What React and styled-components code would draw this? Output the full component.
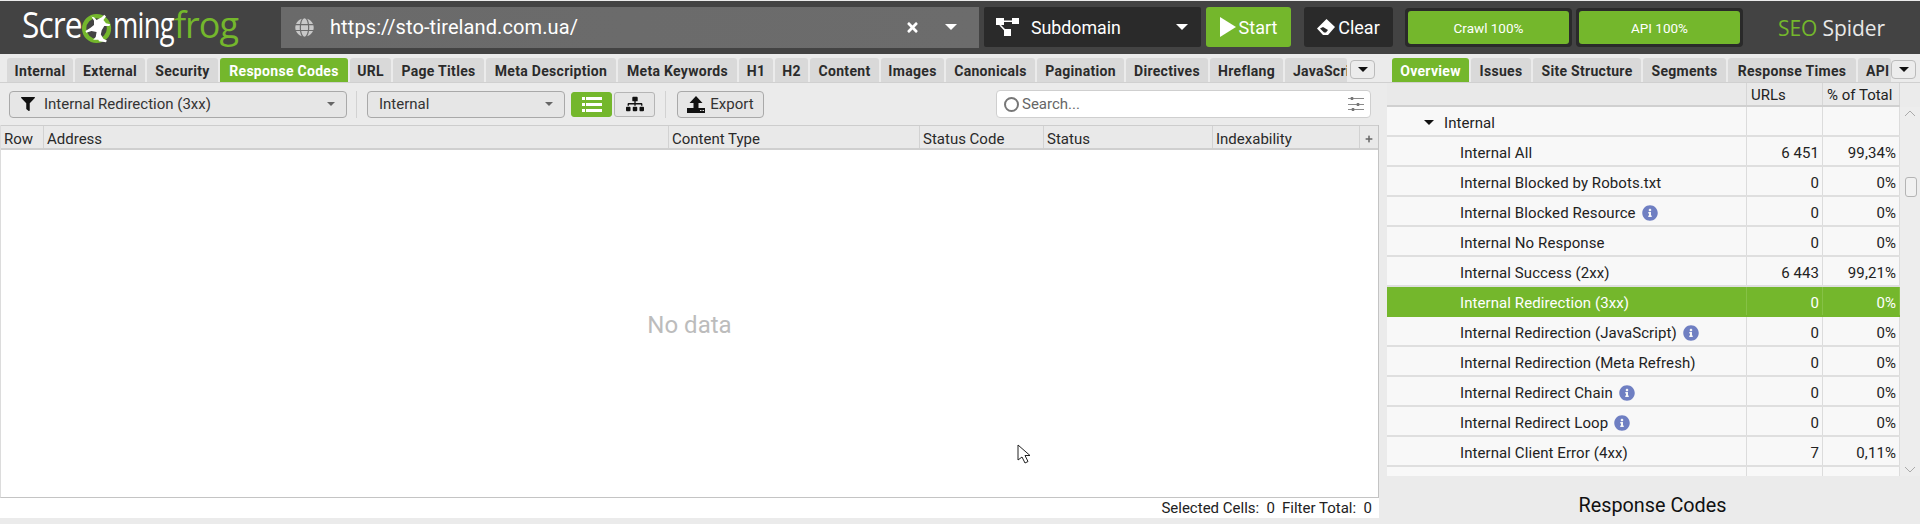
import React from "react";
import styled, { createGlobalStyle } from "styled-components";
import { FaGlobe, FaTimes, FaInfoCircle, FaSitemap, FaFilter, FaPlus } from "react-icons/fa";

const Global = createGlobalStyle`
  html, body { margin: 0; padding: 0; background: #ebebeb; }
  body { font-family: Roboto, "Liberation Sans", sans-serif; overflow: hidden; }
  * { box-sizing: border-box; }
`;
const Page = styled.div`width:1920px;height:524px;display:flex;flex-direction:column;background:#ebebeb;color:#222;overflow:hidden;`;
const TopBar = styled.header`height:53px;margin-top:1px;background:#434343;display:flex;align-items:center;flex:none;`;
const Logo = styled.div`width:281px;padding-left:22px;display:flex;align-items:center;font-family:"Open Sans",sans-serif;font-size:36px;font-weight:400;color:#fff;height:100%;padding-bottom:6px;`;
const LogoWord = styled.span`display:block;width:${p=>p.$w}px;white-space:nowrap;letter-spacing:-1px;transform:scaleX(${p=>p.$sx});transform-origin:left center;color:${p=>p.$green?"#74b72c":"#fff"};flex:none;`;
const LogoGreen = styled.span`color:#74b72c;`;
const UrlField = styled.div`width:698px;height:41px;background:linear-gradient(90deg,#6a6a6a,#6c6c6c);display:flex;align-items:center;padding:0 22px 0 14px;color:#fff;font-size:20px;margin-top:-1px;`;
const UrlText = styled.span`margin-left:16px;flex:1;letter-spacing:.1px;`;
const Caret = styled.span`width:0;height:0;border-left:${p=>p.$s||6}px solid transparent;border-right:${p=>p.$s||6}px solid transparent;border-top:${p=>p.$s||6}px solid ${p=>p.$c||"#fff"};display:block;`;
const ModeBox = styled.div`margin-left:5px;width:217px;height:40px;background:#2a2a2a;border-radius:2px;color:#fff;font-size:17.8px;display:flex;align-items:center;padding:0 13px 0 12px;margin-top:-1px;`;
const ModeText = styled.span`margin-left:12px;flex:1;`;
const Start = styled.div`margin-left:5px;width:85px;height:40px;background:#74b72c;border-radius:3px;color:#fff;font-size:18px;display:flex;align-items:center;justify-content:center;gap:3px;margin-top:-1px;`;
const Clear = styled.div`margin-left:13px;width:89px;height:40px;background:#2a2a2a;border-radius:3px;color:#fff;font-size:18px;display:flex;align-items:center;justify-content:center;gap:3px;margin-top:-1px;`;
const Progress = styled.div`margin-left:${p=>p.$ml}px;width:167px;height:39px;background:#2a2a2a;border-radius:4px;padding:3px;flex:none;`;
const ProgressFill = styled.div`width:100%;height:100%;background:#74b72c;border-radius:3px;color:#fff;font-size:13.5px;display:flex;align-items:center;justify-content:center;`;
const Brand = styled.div`margin-left:35px;font-family:"Open Sans",sans-serif;font-size:21px;color:#e8e8e8;font-weight:400;letter-spacing:-.1px;`;

const Main = styled.main`display:grid;grid-template-columns:1379px 541px;flex:1;min-height:0;`;
const Col = styled.section`display:flex;flex-direction:column;min-width:0;`;
const TabStrip = styled.nav`height:29px;padding:4px 0 0 ${p=>p.$pl}px;display:flex;gap:2px;border-bottom:1px solid #d0d0d0;flex:none;background:#ebebeb;position:relative;`;
const Tab = styled.div`width:${p=>p.$w}px;height:24px;border-radius:3px 3px 0 0;background:${p=>p.$on?"#74b72c":"#d9d9d9"};color:${p=>p.$on?"#fff":"#2b2b2b"};font-size:14px;font-weight:700;display:flex;align-items:center;justify-content:${p=>p.$clip?"flex-start":"center"};padding:1px 0 0 ${p=>p.$clip?"8px":"0"};white-space:nowrap;overflow:hidden;flex:none;letter-spacing:.3px;`;
const MoreBtn = styled.button`margin:2px 0 0 ${p=>p.$ml||1}px;width:25px;height:19px;border:1px solid #bbb;border-radius:4px;background:#ececec;padding:0;display:flex;align-items:center;justify-content:center;flex:none;`;

const FilterBar = styled.div`height:42px;display:flex;align-items:center;padding-left:9px;flex:none;`;
const Combo = styled.div`width:${p=>p.$w}px;height:27px;border:1px solid #a9a9a9;border-radius:4px;background:#e6e6e6;display:flex;align-items:center;padding:0 11px;font-size:15px;color:#333;flex:none;`;
const ComboText = styled.span`flex:1;margin-left:${p=>p.$ml||0}px;`;
const Sep = styled.div`width:1px;height:27px;background:#d2d2d2;margin:0 ${p=>p.$r}px 0 ${p=>p.$l}px;flex:none;`;
const ViewBtn = styled.div`width:41px;height:25px;margin-left:${p=>p.$ml}px;background:${p=>p.$on?"#74b72c":"#e6e6e6"};border:1px solid ${p=>p.$on?"#74b72c":"#b5b5b5"};border-radius:3px;display:flex;align-items:center;justify-content:center;flex:none;`;
const ExportBtn = styled.div`width:87px;height:27px;border:1px solid #a9a9a9;border-radius:4px;background:#e6e6e6;display:flex;align-items:center;justify-content:center;gap:5px;font-size:15px;color:#333;flex:none;`;
const Search = styled.div`margin-left:232px;width:375px;height:28px;background:#fff;border:1px solid #cfcfcf;border-radius:4px;display:flex;align-items:center;padding:0 6px 0 7px;font-size:15px;color:#666;flex:none;`;
const SearchText = styled.span`margin-left:3px;flex:1;`;
const Ring = styled.span`width:15px;height:15px;border:2px solid #777;border-radius:50%;`;

const TableFrame = styled.div`flex:1;min-height:0;background:#fff;border-right:1px solid #c4c4c4;border-left:1px solid #dcdcdc;border-bottom:1px solid #c4c4c4;display:flex;flex-direction:column;`;
const HeadRow = styled.div`height:25px;flex:none;background:#e9e9e9;border-top:1px solid #cdcdcd;border-bottom:2px solid #cfcfcf;display:grid;grid-template-columns:${p=>p.$cols};`;
const HeadCell = styled.div`font-size:15px;color:#2a2a2a;display:flex;align-items:center;padding:3px 0 0 ${p=>p.$center?0:3}px;justify-content:${p=>p.$center?"center":"flex-start"};border-right:${p=>p.$last?"0":"1px solid #d2d2d2"};`;
const Empty = styled.div`flex:1;display:flex;align-items:center;justify-content:center;font-size:24px;color:#bcbcbc;position:relative;padding-top:2px;`;
const Cursor = styled.svg`position:absolute;left:1016px;top:294px;`;
const StatusBar = styled.div`height:20px;flex:none;background:#fff;display:flex;justify-content:flex-end;align-items:center;gap:7px;padding-right:7px;font-size:15px;color:#222;`;
const Foot = styled.div`height:6px;flex:none;`;

const PanelBody = styled.div`display:grid;grid-template-columns:513px 20px;margin-left:8px;height:393px;flex:none;`;
const Tree = styled.div`height:393px;display:flex;flex-direction:column;overflow:hidden;`;
const RightHead = styled.div`height:24px;flex:none;background:#e9e9e9;border-bottom:2px solid #d0d0d0;display:grid;grid-template-columns:360px 76px 77px 20px;width:533px;`;
const RightHeadCell = styled.div`font-size:15px;color:#222;display:flex;align-items:center;padding:2px 0 0 4px;border-right:1px solid #d6d6d6;`;
const Row = styled.div`height:30px;flex:none;display:grid;grid-template-columns:360px 76px 77px;background:${p=>p.$on?"#74b72c":"#f8f8f8"};color:${p=>p.$on?"#fff":"#222"};border-bottom:2px solid ${p=>p.$on?"#74b72c":"#dfdfdf"};font-size:15px;letter-spacing:.08px;`;
const Cell = styled.div`display:flex;align-items:center;border-right:1px solid ${p=>p.$on?"#86c146":"#dcdcdc"};padding:3px ${p=>p.$num?3:0}px 0 ${p=>p.$pl||0}px;justify-content:${p=>p.$num?"flex-end":"flex-start"};`;
const ExpandCaret = styled.span`margin-right:10px;`;
const InfoIcon = styled(FaInfoCircle)`color:#6f7fc2;margin-left:6px;font-size:16px;`;
const ScrollTrack = styled.div`grid-column:2;grid-row:1;background:#ededed;margin-top:24px;display:flex;flex-direction:column;align-items:center;justify-content:space-between;padding:3px 0;height:369px;position:relative;`;
const Thumb = styled.div`position:absolute;top:70px;left:5px;width:12px;height:20px;border:1px solid #b4b4b4;border-radius:3px;background:#f1f1f1;`;
const PanelTitle = styled.div`height:48px;flex:none;font-size:19.8px;color:#111;display:flex;align-items:center;justify-content:center;padding-top:10px;margin-left:7px;width:533px;`;

const leftTabs=[["Internal",66],["External",70],["Security",71],["Response Codes",128,1],["URL",41],["Page Titles",91],["Meta Description",130],["Meta Keywords",119],["H1",34],["H2",33],["Content",69],["Images",63],["Canonicals",89],["Pagination",87],["Directives",82],["Hreflang",73]];
const rightTabs=[["Overview",77,1],["Issues",60],["Site Structure",108],["Segments",83],["Response Times",128]];
const rows=[["Internal All","6 451","99,34%"],["Internal Blocked by Robots.txt","0","0%"],["Internal Blocked Resource","0","0%",0,1],["Internal No Response","0","0%"],["Internal Success (2xx)","6 443","99,21%"],["Internal Redirection (3xx)","0","0%",1],["Internal Redirection (JavaScript)","0","0%",0,1],["Internal Redirection (Meta Refresh)","0","0%"],["Internal Redirect Chain","0","0%",0,1],["Internal Redirect Loop","0","0%",0,1],["Internal Client Error (4xx)","7","0,11%"]];

const Frog=()=> (
  <svg width="30" height="33" viewBox="2 1 35 38" style={{margin:"7px 1px 0 2px",flex:"none"}}>
    <circle cx="19" cy="20" r="14.5" fill="none" stroke="#74b72c" strokeWidth="5"/>
    <path d="M12 6l4 1 3 3 6-3 3-3 2 2-3 4 3 4 5 1-1 2-6 0-3 5-1 5 3 5 4 2-1 2-8-1-1-2-6 0 3-3 1-6-6-1-6 2-1-2 6-4 4-3 0-5-3-5z" fill="#fff"/>
  </svg>
);
const Play=()=> <svg width="16" height="20" viewBox="0 0 16 20"><path d="M0 0l16 10L0 20z" fill="#fff"/></svg>;
const Eraser=()=> <svg width="18" height="16" viewBox="0 0 18 16"><path d="M9.5 0L18 8l-7 8H6L0 9.5z" fill="#fff"/><path d="M3 9.5l3-1.5 5 3-2 2.5H7z" fill="#2a2a2a"/></svg>;
const TreeIcon=()=> <svg width="23" height="18" viewBox="0 0 23 18" fill="#fff"><path d="M0 0h8v7H0zM16 0h7v6h-7zM8 11h7v7H8z"/><path d="M8 2.5h8V4H8zM5 7l5 5-1.2 1.2-5.5-6z"/></svg>;
const ListIcon=()=> <svg width="20" height="15" viewBox="0 0 20 15" fill="#fff"><path d="M0 0h3v3H0zM4 0h16v3H4zM0 6h3v3H0zM4 6h16v3H4zM0 12h3v3H0zM4 12h16v3H4z"/></svg>;
const ExportIcon=()=> <svg width="18" height="17" viewBox="0 0 18 17" fill="#111"><path d="M9 0l6.5 7h-4v5.5h-5V7h-4z"/><path d="M0 12h18v5H0z"/><path d="M13 14h1.5v1H13zM15.5 14H17v1h-1.5z" fill="#ddd"/></svg>;
const Sliders=()=> <svg width="16" height="16" viewBox="0 0 16 16" stroke="#8a8a8a" strokeWidth="1"><path d="M0 2.5h16M0 8.5h16M0 13.5h16"/><path d="M4 1v3M10 7v3M5 12v3" strokeWidth="2.5" stroke="#777"/></svg>;
const Chevron=({up})=> <svg width="12" height="7" viewBox="0 0 12 7" fill="none" stroke="#aaa" strokeWidth="1"><path d={up?"M1 6l5-5 5 5":"M1 1l5 5 5-5"}/></svg>;

export default function App(){
  return <Page><Global/>
    <TopBar>
      <Logo><LogoWord $w={58} $sx={0.88}>Scre</LogoWord><Frog/><LogoWord $w={61} $sx={0.76}>ming</LogoWord><LogoWord $w={62} $sx={1} $green>frog</LogoWord></Logo>
      <UrlField><FaGlobe color="#c8c8c8" size={19}/><UrlText>https://sto-tireland.com.ua/</UrlText><FaTimes color="#fff" size={15}/><span style={{width:25}}/><Caret $s={6}/></UrlField>
      <ModeBox><TreeIcon/><ModeText>Subdomain</ModeText><Caret $s={6}/></ModeBox>
      <Start><Play/>Start</Start>
      <Clear><Eraser/>Clear</Clear>
      <Progress $ml={12}><ProgressFill>Crawl 100%</ProgressFill></Progress>
      <Progress $ml={4}><ProgressFill>API 100%</ProgressFill></Progress>
      <Brand><LogoGreen>SEO</LogoGreen> Spider</Brand>
    </TopBar>
    <Main>
      <Col>
        <TabStrip $pl={7}>
          {leftTabs.map(([t,w,on])=><Tab key={t} $w={w} $on={on}>{t}</Tab>)}
          <Tab $w={62} $clip>JavaScript</Tab>
          <MoreBtn $ml={1}><Caret $s={5} $c="#111"/></MoreBtn>
        </TabStrip>
        <FilterBar>
          <Combo $w={338}><FaFilter size={14} color="#111"/><ComboText $ml={9}>Internal Redirection (3xx)</ComboText><Caret $s={4} $c="#666"/></Combo>
          <Sep $l={9} $r={10}/>
          <Combo $w={198}><ComboText>Internal</ComboText><Caret $s={4} $c="#666"/></Combo>
          <ViewBtn $ml={6} $on><ListIcon/></ViewBtn>
          <ViewBtn $ml={2}><FaSitemap size={18} color="#111"/></ViewBtn>
          <Sep $l={10} $r={11}/>
          <ExportBtn><ExportIcon/>Export</ExportBtn>
          <Search><Ring/><SearchText>Search...</SearchText><Sliders/></Search>
        </FilterBar>
        <TableFrame>
          <HeadRow $cols="43px 625px 251px 124px 169px 147px 1fr">
            <HeadCell>Row</HeadCell><HeadCell>Address</HeadCell><HeadCell>Content Type</HeadCell><HeadCell>Status Code</HeadCell><HeadCell>Status</HeadCell><HeadCell>Indexability</HeadCell><HeadCell $center $last><FaPlus size={8} color="#666"/></HeadCell>
          </HeadRow>
          <Empty>No data
            <Cursor width="16" height="20" viewBox="0 0 16 20"><path d="M1 1v15l4-3 3 6 3-1.5-3-6h5z" fill="#fff" stroke="#222" strokeWidth="1"/></Cursor>
          </Empty>
        </TableFrame>
        <StatusBar><span>Selected Cells:&nbsp; 0</span><span>Filter Total:&nbsp; 0</span></StatusBar>
        <Foot/>
      </Col>
      <Col>
        <TabStrip $pl={13}>
          {rightTabs.map(([t,w,on])=><Tab key={t} $w={w} $on={on}>{t}</Tab>)}
          <Tab $w={33} $clip>API</Tab>
          <MoreBtn $ml={-2}><Caret $s={5} $c="#111"/></MoreBtn>
        </TabStrip>
        <PanelBody>
          <Tree>
            <RightHead><RightHeadCell/><RightHeadCell>URLs</RightHeadCell><RightHeadCell>% of Total</RightHeadCell><RightHeadCell/></RightHead>
            <Row><Cell $pl={37}><ExpandCaret><Caret $s={5} $c="#111"/></ExpandCaret>Internal</Cell><Cell/><Cell/></Row>
            {rows.map(([n,a,b,on,info])=><Row key={n} $on={on}><Cell $on={on} $pl={73}>{n}{info&&<InfoIcon/>}</Cell><Cell $on={on} $num>{a}</Cell><Cell $on={on} $num>{b}</Cell></Row>)}
            <Row><Cell/><Cell/><Cell/></Row>
          </Tree>
          <ScrollTrack><Chevron up/><Thumb/><Chevron/></ScrollTrack>
        </PanelBody>
        <PanelTitle>Response Codes</PanelTitle>
      </Col>
    </Main>
  </Page>;
}
